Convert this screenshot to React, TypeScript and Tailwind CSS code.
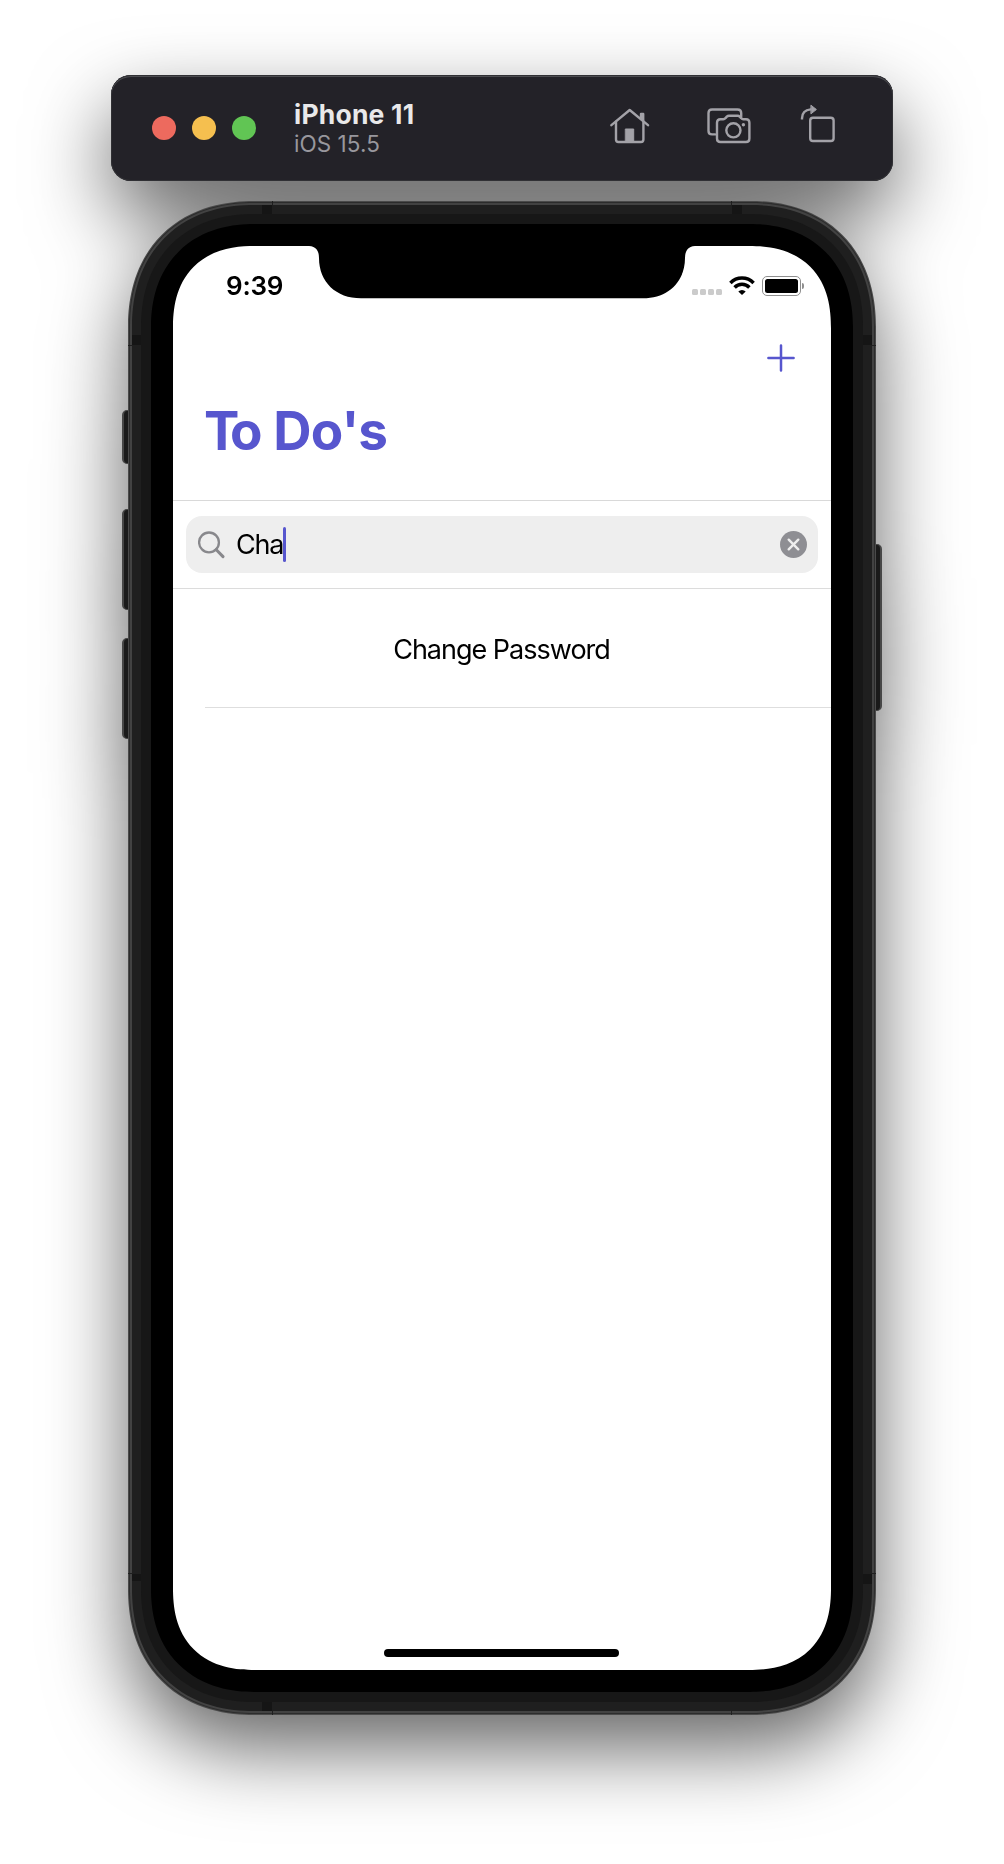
import React from "react";

function HomeIcon() {
  return (
    <svg width="40" height="36" viewBox="0 0 40 36" fill="none" stroke="#a3a2a8" strokeWidth="2.4" strokeLinecap="round" strokeLinejoin="round">
      <path d="M1.4 17.2 L19.7 2 L38 17.2" />
      <path d="M6 13.8 V31.6 Q6 34 8.4 34 H31 Q33.4 34 33.4 31.6 V13.8" />
      <path d="M31 5.9 H33.2 V12.5 L31 10.6 Z" fill="#a3a2a8" />
      <path d="M15.7 21 H23.7 V34 H15.7 Z" fill="#a3a2a8" strokeWidth="1" />
    </svg>
  );
}

function CameraIcon() {
  return (
    <svg width="44" height="36" viewBox="0 0 44 36" fill="none" stroke="#a3a2a8" strokeWidth="2.4" strokeLinecap="round" strokeLinejoin="round">
      <path d="M8 26.4 H5 Q1.5 26.4 1.5 23 V5 Q1.5 1.5 5 1.5 H30.5 Q34.2 1.5 34.2 5 V8.4" />
      <path d="M13.5 11.2 H16.3 Q17.6 11.2 18.5 10.1 L19.8 8.6 Q20.7 7.7 22 7.7 H30.6 Q31.9 7.7 32.8 8.6 L34.1 10.1 Q35 11.2 36.3 11.2 H39 Q42.4 11.2 42.4 14.8 V30.4 Q42.4 34 39 34 H13.5 Q10 34 10 30.4 V14.8 Q10 11.2 13.5 11.2 Z" />
      <circle cx="26.4" cy="22.3" r="7.1" />
      <circle cx="36.4" cy="16.7" r="1.7" fill="#a3a2a8" stroke="none" />
    </svg>
  );
}

function RotateIcon() {
  return (
    <svg width="36" height="40" viewBox="0 0 36 40" fill="none" stroke="#a3a2a8" strokeWidth="2.4" strokeLinecap="round" strokeLinejoin="round">
      <path d="M2 15.6 V14.4 Q2.2 6 10.6 5.4 H11.5" strokeLinecap="butt" />
      <path d="M11.2 1.4 L16.4 5.5 L11.2 9.6 Z" fill="#a3a2a8" strokeWidth="1" />
      <rect x="10.2" y="13.8" width="23.4" height="23.2" rx="2.8" />
    </svg>
  );
}

function Toolbar() {
  return (
    <header className="ml-[111px] flex h-[106px] w-[782px] items-center rounded-[20px] bg-[#232228] shadow-[inset_0_1px_0_#303034,inset_0_2px_0_#4c4c50,inset_0_0_0_1px_#303034]">
      <div className="ml-[41px] flex gap-4">
        <span className="size-6 rounded-full bg-[#ed6a5e]" />
        <span className="size-6 rounded-full bg-[#f5bf4f]" />
        <span className="size-6 rounded-full bg-[#61c554]" />
      </div>
      <div className="ml-[38px] w-[200px]">
        <div className="text-[26.5px] leading-[30px] font-bold tracking-[0.2px] text-[#e9e9ea]">iPhone 11</div>
        <div className="text-[22.5px] leading-[29px] tracking-[0.05px] text-[#98979d]">iOS 15.5</div>
      </div>
      <div className="ml-[116px] flex h-full items-center">
        <div className="-mt-1"><HomeIcon /></div>
        <div className="ml-[57px] -mt-1"><CameraIcon /></div>
        <div className="ml-[49px] -mt-2"><RotateIcon /></div>
      </div>
    </header>
  );
}

function StatusBar() {
  return (
    <div className="flex h-[79px] items-center justify-between pr-[27px] pl-[53px]">
      <span className="text-[26px] leading-[78px] font-semibold tracking-[-0.2px] text-black">9:39</span>
      <div className="flex items-center">
        <div className="mt-3 flex gap-[2px]">
          <i className="size-[6px] rounded-[1.5px] bg-[#cbcbcb]" />
          <i className="size-[6px] rounded-[1.5px] bg-[#cbcbcb]" />
          <i className="size-[6px] rounded-[1.5px] bg-[#cbcbcb]" />
          <i className="size-[6px] rounded-[1.5px] bg-[#cbcbcb]" />
        </div>
        <svg className="ml-[7px]" width="26" height="19" viewBox="0 0 26 19" fill="none" stroke="#000" strokeWidth="3.5">
          <path d="M1.4 6.9 A16.4 16.4 0 0 1 24.6 6.9" />
          <path d="M5.6 11.4 A10.4 10.4 0 0 1 20.4 11.4" />
          <path d="M13 18.9 L9.3 15.4 A5.3 5.3 0 0 1 16.7 15.4 Z" fill="#000" stroke="none" />
        </svg>
        <div className="ml-[7px] h-5 w-[39px] rounded-[5px] border border-[#8f8f8f] bg-white p-[2px]">
          <div className="h-full rounded-[2.5px] bg-black" />
        </div>
        <div className="ml-[1.5px] h-[6px] w-[2px] rounded-r-full bg-[#8f8f8f]" />
      </div>
    </div>
  );
}

function Screen() {
  return (
    <main className="relative h-[1424px] w-[658px] overflow-hidden rounded-[82px] bg-white [corner-shape:superellipse(1.25)]">
      <svg className="absolute top-0 left-[136px]" width="386" height="53" viewBox="0 0 386 53">
        <path d="M0 0 Q10 0.6 10 12 C10 36 27 52.3 52 52.3 H334 C359 52.3 376 36 376 12 Q376 0.6 386 0 Z" fill="#000" />
      </svg>
      <StatusBar />
      <div className="flex h-[66px] items-center justify-end pr-9">
        <svg width="28" height="28" viewBox="0 0 28 28" stroke="#5756ce" strokeWidth="2.5" strokeLinecap="round">
          <path d="M14 1.4 V26.6 M1.4 14 H26.6" />
        </svg>
      </div>
      <h1 className="h-[110px] border-b border-[#d9d9d9] pt-0.5 pl-[31px] text-[53px] leading-[76px] font-bold tracking-[-0.8px] text-[#5756ce]">
        <span className="tracking-[-9.5px]">T</span>o Do's
      </h1>
      <div className="h-[88px] border-b border-[#dcdcdc] px-[13px] pt-[15px]">
        <div className="flex h-[57px] items-center rounded-[16px] bg-[#eeeeee] pr-[11px] pl-3">
          <svg width="27" height="28" viewBox="0 0 27 28" fill="none" stroke="#88888c" strokeLinecap="round">
            <circle cx="11" cy="11.4" r="9.9" strokeWidth="2.3" />
            <path d="M18.3 18.7 L25 25.6" strokeWidth="3" />
          </svg>
          <span className="ml-[11px] pt-0.5 text-[27px] tracking-[-1.2px] text-black">Cha</span>
          <span className="h-[35px] w-[3px] rounded-full bg-[#5756ce]" />
          <svg className="ml-auto" width="27" height="27" viewBox="0 0 27 27">
            <circle cx="13.5" cy="13.5" r="13.5" fill="#8e8e93" />
            <path d="M8.7 8.7 L18.3 18.3 M18.3 8.7 L8.7 18.3" stroke="#eeeeee" strokeWidth="2.4" strokeLinecap="round" />
          </svg>
        </div>
      </div>
      <div className="ml-8 h-[119px] border-b border-[#dedede] pr-[33px] text-center text-[27px] leading-[121px] tracking-[-1px] text-black">
        Change Password
      </div>
      <div className="absolute bottom-[13px] left-[211px] h-2 w-[235px] rounded-full bg-black" />
    </main>
  );
}

const sideKey = "absolute w-[10px] border border-[#474747] bg-[#1a1a1a]";

function Phone() {
  return (
    <div className="relative mt-5 ml-32 w-[748px]">
      <div className={sideKey + " top-[209px] -left-[6px] h-[54px] rounded-l-[5px] border-l-2"} />
      <div className={sideKey + " top-[308px] -left-[6px] h-[101px] rounded-l-[5px] border-l-2"} />
      <div className={sideKey + " top-[437px] -left-[6px] h-[101px] rounded-l-[5px] border-l-2"} />
      <div className={sideKey + " top-[343px] -right-[6px] h-[167px] rounded-r-[5px] border-r-2"} />
      <div className="relative h-[1514px] rounded-[126px] bg-[#4a4a4a] p-[1px] [corner-shape:superellipse(1.15)]">
        <div className="h-full rounded-[125px] bg-[#2c2c2c] p-[1px] [corner-shape:superellipse(1.15)]">
          <div className="h-full rounded-[124px] bg-[#424242] p-[2px] [corner-shape:superellipse(1.15)]">
            <div className="relative h-full rounded-[122px] bg-[#1f1f1f] p-[9px] [corner-shape:superellipse(1.15)]">
              <i className="absolute top-0 left-[130px] h-[9px] w-[10px] bg-[#151515]" />
              <i className="absolute top-0 right-[130px] h-[9px] w-[10px] bg-[#151515]" />
              <i className="absolute top-[130px] left-0 h-[10px] w-[9px] bg-[#151515]" />
              <i className="absolute top-[130px] right-0 h-[10px] w-[9px] bg-[#151515]" />
              <i className="absolute bottom-[130px] left-0 h-[7px] w-[9px] bg-[#151515]" />
              <i className="absolute right-0 bottom-[127px] h-[10px] w-[9px] bg-[#151515]" />
              <i className="absolute bottom-0 left-[130px] h-[9px] w-[10px] bg-[#151515]" />
              <div className="h-full rounded-[113px] bg-[#171717] p-[10px] [corner-shape:superellipse(1.15)]">
                <div className="h-full rounded-[103px] bg-black p-[22px] [corner-shape:superellipse(1.15)]">
                  <Screen />
                </div>
              </div>
            </div>
          </div>
        </div>
        <i className="absolute top-0 left-36 h-1 w-px bg-[#1f1f1f]" />
        <i className="absolute top-0 right-36 h-1 w-px bg-[#1f1f1f]" />
        <i className="absolute bottom-0 left-36 h-1 w-px bg-[#1f1f1f]" />
        <i className="absolute right-36 bottom-0 h-1 w-px bg-[#1f1f1f]" />
        <i className="absolute top-36 left-0 h-px w-1 bg-[#1f1f1f]" />
        <i className="absolute top-36 right-0 h-px w-1 bg-[#1f1f1f]" />
        <i className="absolute bottom-[141px] left-0 h-px w-1 bg-[#1f1f1f]" />
        <i className="absolute right-0 bottom-[141px] h-px w-1 bg-[#1f1f1f]" />
      </div>
    </div>
  );
}

export default function App() {
  return (
    <div className="h-[1864px] w-[1004px] overflow-hidden bg-white font-['Inter','Liberation_Sans',sans-serif]">
      <div className="h-full pt-[75px] [filter:drop-shadow(0_34px_40px_rgba(0,0,0,0.6))]">
        <Toolbar />
        <Phone />
      </div>
    </div>
  );
}
